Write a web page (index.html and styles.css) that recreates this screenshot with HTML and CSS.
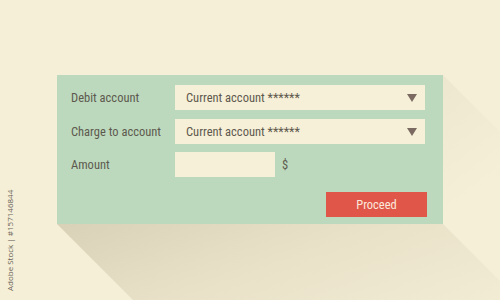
FILE: index.html
```html
<!DOCTYPE html>
<html lang="en">
<head>
  <meta charset="UTF-8" />
  <meta name="viewport" content="width=device-width, initial-scale=1.0" />
  <title>Transfer form</title>
  <link rel="stylesheet" href="styles.css">
</head>
<body>
  <div class="stage">
    <div class="card">
      <div class="row">
        <label class="label">Debit account</label>
        <div class="select">
          <span>Current account ******</span>
          <svg class="arrow" viewBox="0 0 10 8"><path d="M0 0h10L5 8z" /></svg>
        </div>
      </div>
      <div class="row">
        <label class="label">Charge to account</label>
        <div class="select">
          <span>Current account ******</span>
          <svg class="arrow" viewBox="0 0 10 8"><path d="M0 0h10L5 8z" /></svg>
        </div>
      </div>
      <div class="row">
        <label class="label">Amount</label>
        <div class="amount">
          <div class="input"></div>
          <span class="currency">$</span>
        </div>
      </div>
      <div class="actions">
        <button class="proceed">Proceed</button>
      </div>
    </div>
    <div class="stock-id">Adobe Stock | #157146844</div>
  </div>
</body>
</html>
```

FILE: styles.css
```css
body {
  margin: 0;
  padding: 0;
  font-family: 'Roboto Condensed', 'Roboto', 'Liberation Sans', sans-serif;
  font-stretch: 75%;
  background: #f5efd8;
  overflow: hidden;
}

.stage {
  position: relative;
  width: 500px;
  height: 300px;
  padding-top: 75px;
  padding-left: 57px;
  box-sizing: border-box;
  overflow: hidden;
}

.card {
  position: relative;
  width: 386px;
  height: 149px;
  box-sizing: border-box;
  padding: 10px 18px 8px 14px;
  background: #bcd9be;
  display: flex;
  flex-direction: column;
  gap: 8px;
}

/* long shadow under the card */
.card::before,
.card::after {
  content: '';
  position: absolute;
  z-index: -1;
  transform-origin: top left;
}

.card::before {
  left: 0;
  top: 100%;
  width: 100%;
  height: 120px;
  transform: skewX(45deg);
  background: linear-gradient(165deg, rgba(190, 180, 150, 0.5) 0%, rgba(205, 195, 165, 0.3) 40%, rgba(245, 239, 216, 0) 90%);
}

.card::after {
  left: 100%;
  top: 0;
  width: 120px;
  height: 100%;
  transform: skewY(45deg);
  background: linear-gradient(120deg, rgba(200, 190, 160, 0.16) 0%, rgba(245, 239, 216, 0) 40%);
}

.row {
  display: flex;
  align-items: center;
  height: 25px;
}

.row:nth-child(2) {
  margin-top: 1px;
}

.label {
  width: 104px;
  font-size: 12.5px;
  color: #5e594e;
}

.select {
  flex: 1;
  height: 25px;
  background: #f7f0d8;
  display: flex;
  align-items: center;
  justify-content: space-between;
  padding: 0 8px 0 11px;
  font-size: 12.5px;
  color: #5e594e;
}

.arrow {
  width: 10px;
  height: 8px;
  fill: #7a6a62;
}

.amount {
  display: flex;
  align-items: center;
  gap: 7px;
}

.input {
  width: 100px;
  height: 25px;
  background: #f7f0d8;
}

.currency {
  font-size: 12.5px;
  color: #5e594e;
}

.actions {
  display: flex;
  justify-content: flex-end;
  margin-top: 7px;
  margin-right: -2px;
}

.proceed {
  width: 101px;
  height: 25px;
  border: none;
  background: #e0574a;
  color: #fbe8da;
  font-family: inherit;
  font-stretch: inherit;
  font-size: 12.5px;
  cursor: pointer;
}

.stock-id {
  position: absolute;
  left: 4px;
  bottom: 9px;
  transform: rotate(-90deg) translateY(100%);
  transform-origin: bottom left;
  font-family: 'Open Sans', sans-serif;
  font-stretch: normal;
  font-size: 8px;
  color: #6a6355;
  white-space: nowrap;
}
```
